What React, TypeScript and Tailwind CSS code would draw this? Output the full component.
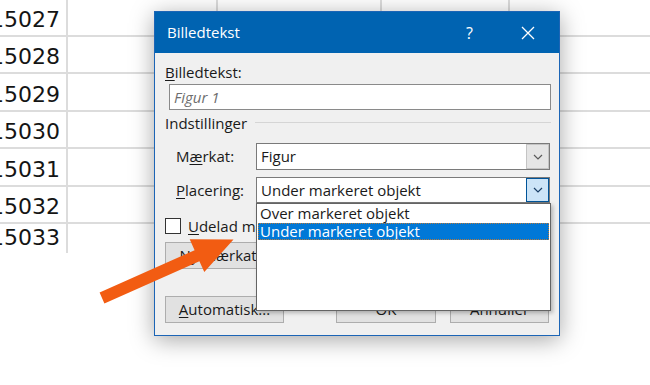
import React from "react";

const rows = [
  { n: "15027", h: "h-[37px]" },
  { n: "15028", h: "h-[37px]" },
  { n: "15029", h: "h-[38px]" },
  { n: "15030", h: "h-[37px]" },
  { n: "15031", h: "h-[38px]" },
  { n: "15032", h: "h-[37px]" },
  { n: "15033", h: "h-[29px]" },
];

function Sheet() {
  return (
    <div className="flex flex-col">
      {rows.map((r, i) => (
        <div
          key={r.n}
          className={`flex ${r.h} ${i < rows.length - 1 ? "border-b-2 border-[#dcdcdc]" : ""}`}
        >
          <div className="w-[70px] shrink-0 border-r-2 border-[#dcdcdc] flex items-end justify-end pr-[6px] pb-[4px] overflow-hidden">
            <span className="font-['DejaVu_Sans',sans-serif] text-[22px] leading-none text-[#141414] whitespace-nowrap">
              {r.n}
            </span>
          </div>
          <div className="w-[150px] shrink-0 border-r-2 border-[#dcdcdc]" />
          <div className="w-[164px] shrink-0 border-r-2 border-[#dcdcdc]" />
          <div className="w-[128px] shrink-0 border-r-2 border-[#dcdcdc]" />
          <div className="flex-1" />
        </div>
      ))}
    </div>
  );
}

function Chevron({ className }: { className?: string }) {
  return (
    <svg className={className} width="10" height="6" viewBox="0 0 10 6" fill="none" stroke="currentColor" strokeWidth={1.2}>
      <path d="M1 1l4 4 4-4" />
    </svg>
  );
}

function Btn({ children, className }: { children: React.ReactNode; className?: string }) {
  return (
    <div className={`h-[27px] shrink-0 bg-[#e1e1e1] border border-[#adadad] flex items-center justify-center text-[15px] text-[#1a1a1a] whitespace-nowrap ${className ?? ""}`}>
      {children}
    </div>
  );
}

function Combo({ value, active }: { value: string; active?: boolean }) {
  return (
    <div className="w-[294px] h-full bg-white border border-[#7a7a7a] flex items-stretch">
      <div className="flex-1 flex items-center pl-[4px] text-[15px] text-[#1a1a1a]">{value}</div>
      <div
        className={`w-[23px] flex items-center justify-center border ${
          active ? "bg-[#cce4f7] border-[#005499] text-[#1b3f66]" : "bg-[#e5e5e5] border-[#c4c4c4] text-[#5a5a5a]"
        }`}
      >
        <Chevron />
      </div>
    </div>
  );
}

function Dialog() {
  return (
    <div className="absolute left-[154px] top-[11px] w-[406px] h-[325px] flex flex-col bg-[#f0f0f0] border border-[#1c65b6] shadow-[0_4px_22px_rgba(0,0,0,0.35)] font-['Open_Sans',sans-serif] text-[#1a1a1a]">
      {/* Title bar */}
      <div className="h-[41px] shrink-0 bg-[#0063b1] flex items-center text-white">
        <span className="pl-[12px] text-[15px] flex-1">Billedtekst</span>
        <span className="text-[16px] mr-[48px]">?</span>
        <svg className="mr-[24px]" width="14" height="14" viewBox="0 0 14 14" stroke="white" strokeWidth={1.3}>
          <path d="M1 1l12 12M13 1L1 13" />
        </svg>
      </div>

      <div className="flex flex-col pl-[10px] pr-[8px]">
        <div className="mt-[9px] h-[20px] text-[15px] leading-[20px]">
          <span className="underline underline-offset-2">B</span>illedtekst:
        </div>
        <div className="mt-[2px] ml-[4px] h-[26px] bg-white border border-[#8a8a8a] flex items-center pl-[4px] text-[15px] italic text-[#6d6d6d]">
          Figur 1
        </div>

        <div className="mt-[3px] h-[20px] flex items-center gap-[8px] text-[15px] leading-[20px]">
          <span>Indstillinger</span>
          <div className="flex-1 h-px bg-[#d5d5d5] mt-[-2px]" />
        </div>

        <div className="mt-[10px] h-[27px] flex items-center">
          <span className="w-[91px] pl-[11px] text-[15px]">
            M<span className="underline underline-offset-2">æ</span>rkat:
          </span>
          <Combo value="Figur" />
        </div>

        <div className="mt-[7px] h-[26px] flex items-center">
          <span className="w-[91px] pl-[11px] text-[15px]">
            <span className="underline underline-offset-2">P</span>lacering:
          </span>
          <Combo value="Under markeret objekt" active />
        </div>

        <div className="mt-[15px] h-[16px] flex items-center gap-[7px] whitespace-nowrap">
          <div className="w-[16px] h-[16px] bg-white border border-[#333]" />
          <span className="text-[15px]">
            <span className="underline underline-offset-2">U</span>delad mærkat fra billedtekst
          </span>
        </div>

        <div className="mt-[8px] flex gap-[6px]">
          <Btn className="w-[118px]">
            <span className="underline underline-offset-2">N</span>y mærkat...
          </Btn>
          <Btn className="w-[100px]">Slet mærkat</Btn>
        </div>

        <div className="mt-[27px] flex">
          <Btn className="w-[119px]">
            <span className="underline underline-offset-2">A</span>utomatisk...
          </Btn>
          <Btn className="w-[100px] ml-[52px]">OK</Btn>
          <Btn className="w-[99px] ml-[14px]">Annuller</Btn>
        </div>
      </div>

      {/* Open dropdown list */}
      <div className="absolute left-[101px] top-[191px] w-[295px] h-[108px] bg-white border border-[#646464] shadow-[2px_2px_4px_rgba(0,0,0,0.25)] flex flex-col text-[15px]">
        <div className="h-[19px] flex items-center pl-[3px] leading-none">Over markeret objekt</div>
        <div className="h-[17px] mx-px flex items-center pl-[2px] bg-[#0078d7] text-white outline-1 outline-dotted outline-[#b77a3c] -outline-offset-1 leading-none">
          Under markeret objekt
        </div>
      </div>
    </div>
  );
}

function Arrow() {
  return (
    <svg className="absolute left-0 top-0 pointer-events-none" width="650" height="385" viewBox="0 0 650 385">
      <polygon
        fill="#f25c12"
        points="99.6,292.5 194.6,250.2 189.7,239.3 233.5,239.4 204.3,272.1 199.4,261.2 104.4,303.5"
      />
    </svg>
  );
}

export default function App() {
  return (
    <div className="relative w-[650px] h-[385px] overflow-hidden bg-white">
      <div className="ml-[-2px]">
        <Sheet />
      </div>
      <Dialog />
      <Arrow />
    </div>
  );
}
